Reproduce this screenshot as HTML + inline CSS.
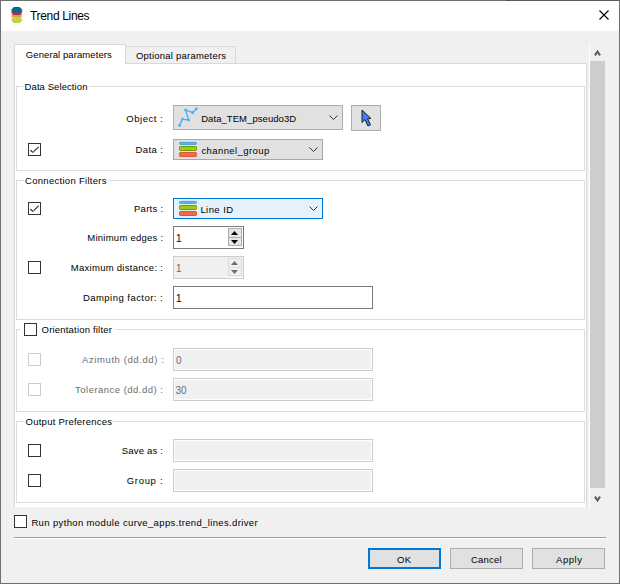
<!DOCTYPE html>
<html><head><meta charset="utf-8">
<style>
*{box-sizing:border-box;margin:0;padding:0}
html,body{width:620px;height:584px;overflow:hidden;background:#f0f0f0}
body{position:relative;font-family:"Liberation Sans",sans-serif;color:#000}
.a{position:absolute}
.t{position:absolute;white-space:pre;font-size:10px;line-height:12px;font-family:"Liberation Sans",sans-serif}
.r{text-align:right;width:150px}
.cb{position:absolute;width:13px;height:13px;border:1px solid #333;background:#fff}
.cbd{border-color:#cccccc}
.grp{position:absolute;left:16px;width:569px;border:1px solid #dcdcdc}
.gt{position:absolute;background:#fff;height:12px}
.combo{position:absolute;background:#e1e1e1;border:1px solid #adadad}
.inp{position:absolute;background:#fff;border:1px solid #7a7a7a}
.dis{background:#f0f0f0;border:1px solid #cccccc;box-shadow:inset 0 0 0 1px #fff}
.btn{position:absolute;top:548px;width:73px;height:21px;background:#e1e1e1;border:1px solid #adadad}
.gray{color:#6d6d6d}
svg{position:absolute;overflow:visible}
</style></head><body>
<!-- window frame -->
<div class="a" style="left:0;top:0;width:620px;height:584px;border:1px solid #6f6f6f"></div>
<div class="a" style="left:1px;top:1px;width:618px;height:30px;background:#fff"></div>
<div class="a" style="left:508px;top:0;width:111px;height:1px;background:#5c5c5c"></div>
<div class="a" style="left:507px;top:0;width:1px;height:1px;background:#333"></div>
<!-- app icon -->
<svg style="left:0;top:0" width="40" height="30">
 <polygon points="13.8,17.2 19.7,17.2 22.5,20.1 19.7,23 13.8,23 11,20.1" fill="#b5d83a"/>
 <polygon points="13.8,13.8 19.7,13.8 22.5,16.700000000000003 19.7,19.6 13.8,19.6 11,16.700000000000003" fill="#f7c12e"/>
 <polygon points="13.8,11.2 19.7,11.2 22.5,14.15 19.7,17.1 13.8,17.1 11,14.15" fill="#b3a77f"/>
 <polygon points="13.8,9.2 19.7,9.2 22.5,12.05 19.7,14.9 13.8,14.9 11,12.05" fill="#d41f4a"/>
 <polygon points="13.8,7 19.7,7 22.5,9.95 19.7,12.9 13.8,12.9 11,9.95" fill="#0b6b82"/>
</svg>
<div class="t" style="left:30px;top:8.6px;font-size:12px;line-height:14px;letter-spacing:-0.33px">Trend Lines</div>
<svg style="left:0;top:0" width="620" height="30"><path d="M599.5 10.5 L608.5 19.5 M608.5 10.5 L599.5 19.5" stroke="#000" stroke-width="1.1"/></svg>

<!-- tab widget -->
<div class="a" style="left:14px;top:63px;width:573px;height:444px;background:#fff;border:1px solid #d9d9d9;border-bottom:none"></div>
<div class="a" style="left:125px;top:46px;width:111px;height:18px;background:#f0f0f0;border:1px solid #d9d9d9"></div>
<div class="a" style="left:14px;top:44px;width:112px;height:20px;background:#fff;border:1px solid #d9d9d9;border-bottom:none"></div>
<div class="t" style="left:25.80px;top:49px;letter-spacing:0.091px;font-size:9.5px">General parameters</div>
<div class="t" style="left:136.00px;top:50px;font-size:9.5px;letter-spacing:0.222px">Optional parameters</div>

<!-- scrollbar -->
<div class="a" style="left:589px;top:44px;width:1px;height:463px;background:#fff"></div>
<div class="a" style="left:590px;top:61px;width:15px;height:427px;background:#cdcdcd"></div>
<svg style="left:0;top:0" width="620" height="584">
 <path d="M594.9 55.4 L597.5 51.6 L600.1 55.4" fill="none" stroke="#606060" stroke-width="2.1"/>
 <path d="M594.9 496.6 L597.5 500.4 L600.1 496.6" fill="none" stroke="#606060" stroke-width="2.1"/>
</svg>

<!-- group 1 -->
<div class="grp" style="top:86px;height:85px"></div>
<div class="gt" style="left:24px;top:80px;width:65px"></div>
<div class="t" style="left:24.60px;top:81px;letter-spacing:0.081px;font-size:9.5px">Data Selection</div>

<div class="t r" style="left:13.10px;top:113px;letter-spacing:0.499px;font-size:9.5px">Object :</div>
<div class="combo" style="left:173px;top:105px;width:170px;height:25px"></div>
<svg style="left:0;top:0" width="620" height="584">
 <polyline points="179.5,125.4 182.5,119.1 188.7,120.1 185.5,109.9 192.6,112.7 196.5,108.8" fill="none" stroke="#48b2f0" stroke-width="1.45" stroke-linejoin="round"/>
 <g fill="#48b2f0"><circle cx="179.5" cy="125.4" r="1.35"/><circle cx="182.5" cy="119.1" r="1.35"/><circle cx="188.7" cy="120.1" r="1.35"/><circle cx="185.5" cy="109.9" r="1.35"/><circle cx="192.6" cy="112.7" r="1.35"/><circle cx="196.5" cy="108.8" r="1.35"/></g>
 <path d="M329.5 115.5 L333.5 119.5 L337.5 115.5" fill="none" stroke="#333" stroke-width="1"/>
</svg>
<div class="t" style="left:201.20px;top:113px;letter-spacing:0.058px;font-size:9.5px">Data_TEM_pseudo3D</div>
<div class="combo" style="left:351px;top:105px;width:30px;height:26px"></div>
<svg style="left:0;top:0" width="620" height="584">
 <path d="M362 110 L362 122.5 L365 119.6 L367.9 126 L370.5 124.9 L367.7 118.8 L371 118.5 Z" fill="#3f7ff2" stroke="#111" stroke-width="0.9" stroke-linejoin="miter"/>
</svg>

<div class="cb" style="left:28px;top:143px"></div>
<svg style="left:0;top:0" width="620" height="584"><path d="M30.4 150.2 L33.4 152.6" fill="none" stroke="#222" stroke-width="1.2"/><path d="M33.7 151.6 L38.6 146.9" fill="none" stroke="#222" stroke-width="1.05"/></svg>
<div class="t r" style="left:13.20px;top:144px;font-size:9.5px;letter-spacing:0.400px">Data :</div>
<div class="combo" style="left:173px;top:139px;width:150px;height:21px;border-color:#9ea9b3"></div>
<svg style="left:0;top:0" width="620" height="584">
 <rect rx="0.8" x="179.5" y="142.4" width="17" height="2" fill="#62b5e8" stroke="#4a9fd4" stroke-width="1"/>
 <rect rx="0.8" x="179.5" y="146.5" width="17" height="4" fill="#9fcb10" stroke="#6e9c00" stroke-width="1"/>
 <rect rx="0.8" x="179.5" y="152.5" width="17" height="4" fill="#f26a4c" stroke="#d8553a" stroke-width="1"/>
 <path d="M309.5 147.5 L313.5 151.5 L317.5 147.5" fill="none" stroke="#333" stroke-width="1"/>
</svg>
<div class="t" style="left:201.40px;top:145px;letter-spacing:0.416px;font-size:9.5px">channel_group</div>

<!-- group 2 -->
<div class="grp" style="top:180px;height:140px"></div>
<div class="gt" style="left:24px;top:174px;width:84px"></div>
<div class="t" style="left:25.00px;top:175px;font-size:9.5px;letter-spacing:0.294px">Connection Filters</div>

<div class="cb" style="left:28px;top:202px"></div>
<svg style="left:0;top:0" width="620" height="584"><path d="M30.4 209.2 L33.4 211.6" fill="none" stroke="#222" stroke-width="1.2"/><path d="M33.7 210.6 L38.6 205.9" fill="none" stroke="#222" stroke-width="1.05"/></svg>
<div class="t r" style="left:13.40px;top:203px;letter-spacing:0.284px;font-size:9.5px">Parts :</div>
<div class="combo" style="left:173px;top:198px;width:150px;height:21px;background:#e5f1fb;border-color:#0078d7"></div>
<svg style="left:0;top:0" width="620" height="584">
 <rect rx="0.8" x="179.5" y="201.4" width="17" height="2" fill="#62b5e8" stroke="#4a9fd4" stroke-width="1"/>
 <rect rx="0.8" x="179.5" y="205.5" width="17" height="4" fill="#9fcb10" stroke="#6e9c00" stroke-width="1"/>
 <rect rx="0.8" x="179.5" y="211.5" width="17" height="4" fill="#f26a4c" stroke="#d8553a" stroke-width="1"/>
 <path d="M309.5 206.5 L313.5 210.5 L317.5 206.5" fill="none" stroke="#333" stroke-width="1"/>
</svg>
<div class="t" style="left:200.40px;top:204px;letter-spacing:0.433px;font-size:9.5px">Line ID</div>

<div class="t r" style="left:13.40px;top:232px;letter-spacing:0.255px;font-size:9.5px">Minimum edges :</div>
<div class="inp" style="left:173px;top:226px;width:71px;height:23px"></div>
<div class="a" style="left:228px;top:228px;width:14px;height:10px;background:#e6e6e6;border:1px solid #adadad"></div>
<div class="a" style="left:228px;top:237px;width:14px;height:9px;background:#e6e6e6;border:1px solid #adadad"></div>
<svg style="left:0;top:0" width="620" height="584">
 <path d="M231 235 L234.5 231 L238 235 Z" fill="#000"/>
 <path d="M231 240 L234.5 244 L238 240 Z" fill="#000"/>
</svg>
<div class="t" style="left:176px;top:233px;font-size:10px">1</div>

<div class="cb" style="left:28px;top:261px"></div>
<div class="t r" style="left:13.20px;top:262px;font-size:9.5px;letter-spacing:0.278px">Maximum distance: :</div>
<div class="a dis" style="left:173px;top:256px;width:71px;height:23px;box-shadow:none"></div>
<div class="a" style="left:228px;top:258px;width:14px;height:10px;background:#efefef;border:1px solid #dcdcdc"></div>
<div class="a" style="left:228px;top:267px;width:14px;height:9px;background:#efefef;border:1px solid #dcdcdc"></div>
<div class="a" style="left:227px;top:277px;width:16px;height:1px;background:#fff"></div>
<svg style="left:0;top:0" width="620" height="584">
 <path d="M231 265 L234.5 261 L238 265 Z" fill="#6d6d6d"/>
 <path d="M231 270 L234.5 274 L238 270 Z" fill="#6d6d6d"/>
</svg>
<div class="t gray" style="left:176px;top:263px;font-size:10px">1</div>

<div class="t r" style="left:13.20px;top:292px;letter-spacing:0.467px;font-size:9.5px">Damping factor: :</div>
<div class="inp" style="left:173px;top:286px;width:200px;height:23px"></div>
<div class="t" style="left:176px;top:293px;font-size:10px">1</div>

<!-- group 3 -->
<div class="grp" style="top:329px;height:83px"></div>
<div class="gt" style="left:20px;top:323px;width:95px"></div>
<div class="cb" style="left:24px;top:323px"></div>
<div class="t" style="left:41.60px;top:324px;font-size:9.5px;letter-spacing:0.188px">Orientation filter</div>

<div class="cb cbd" style="left:28px;top:353px"></div>
<div class="t r gray" style="left:14.40px;top:354px;letter-spacing:0.588px;font-size:9.5px">Azimuth (dd.dd) :</div>
<div class="a dis" style="left:173px;top:348px;width:200px;height:23px"></div>
<div class="t gray" style="left:176px;top:355px;font-size:10px">0</div>

<div class="cb cbd" style="left:28px;top:383px"></div>
<div class="t r gray" style="left:13.40px;top:384px;letter-spacing:0.478px;font-size:9.5px">Tolerance (dd.dd) :</div>
<div class="a dis" style="left:173px;top:378px;width:200px;height:23px"></div>
<div class="t gray" style="left:175.6px;top:385px;font-size:10px;letter-spacing:-0.2px">30</div>

<!-- group 4 -->
<div class="grp" style="top:421px;height:82px"></div>
<div class="gt" style="left:24px;top:415px;width:89px"></div>
<div class="t" style="left:25.60px;top:416px;font-size:9.5px;letter-spacing:0.236px">Output Preferences</div>

<div class="cb" style="left:28px;top:444px"></div>
<div class="t r" style="left:13.20px;top:445px;letter-spacing:0.192px;font-size:9.5px">Save as :</div>
<div class="a dis" style="left:173px;top:439px;width:200px;height:23px"></div>

<div class="cb" style="left:28px;top:474px"></div>
<div class="t r" style="left:13.20px;top:475px;letter-spacing:0.670px;font-size:9.5px">Group :</div>
<div class="a dis" style="left:173px;top:469px;width:200px;height:23px"></div>

<!-- bottom -->
<div class="cb" style="left:14px;top:515px"></div>
<div class="t" style="left:31.40px;top:517px;letter-spacing:0.361px;font-size:9.5px">Run python module curve_apps.trend_lines.driver</div>
<div class="a" style="left:14px;top:537px;width:592px;height:1px;background:#a0a0a0"></div>
<div class="a" style="left:14px;top:538px;width:591px;height:1px;background:#fff"></div>

<div class="btn" style="left:368px;border:2px solid #0078d7"></div>
<div class="t" style="left:397.00px;top:554px;font-size:9.5px;letter-spacing:0.400px">OK</div>
<div class="btn" style="left:450px"></div>
<div class="t" style="left:471.00px;top:554px;font-size:9.5px;letter-spacing:0.200px">Cancel</div>
<div class="btn" style="left:532px"></div>
<div class="t" style="left:556.00px;top:554px;font-size:9.5px;letter-spacing:0.550px">Apply</div>
</body></html>
